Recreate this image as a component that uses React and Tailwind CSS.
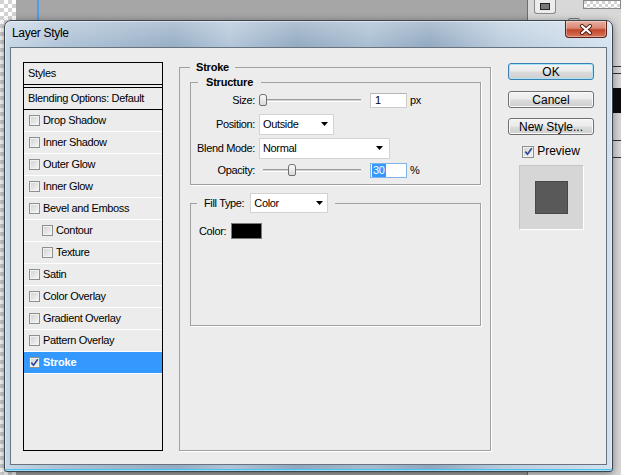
import React from 'react';

const SANS = "font-['Liberation_Sans',Arial,sans-serif]";

const styleItems = [
    { label: 'Drop Shadow' },
    { label: 'Inner Shadow' },
    { label: 'Outer Glow' },
    { label: 'Inner Glow' },
    { label: 'Bevel and Emboss' },
    { label: 'Contour', sub: true },
    { label: 'Texture', sub: true },
    { label: 'Satin' },
    { label: 'Color Overlay' },
    { label: 'Gradient Overlay' },
    { label: 'Pattern Overlay' },
    { label: 'Stroke', on: true },
];

const Check = ({ checked, big }) => (
    <span className={`${big ? 'w-[12px] h-[12px]' : 'w-[11px] h-[11px]'} shrink-0 flex items-center justify-center border border-[#8e8f8f] bg-[linear-gradient(135deg,#d0d0d0,#f7f7f7)] shadow-[inset_0_0_0_1px_#f2f2f2]`}>
        {checked && (
            <svg width="9" height="9" viewBox="0 0 9 9">
                <path d="M1.3 4.6 L3.5 7.2 L7.8 1.3" fill="none" stroke="#2d4b9b" strokeWidth="1.7" />
            </svg>
        )}
    </span>
);

const Arrow = () => (
    <svg width="7" height="4" viewBox="0 0 7 4"><path d="M0 0H7L3.5 4Z" fill="#000" /></svg>
);

// thumb offset is the only computed value
const Slider = ({ value, max }) => (
    <div className="ml-[4px] relative w-[106px] h-[12px]">
        <div className="absolute left-[4px] right-[4px] top-[5px] h-[3px] bg-[#d2d2d2] border-t border-t-[#9c9c9c] border-b border-b-white" />
        <div className="absolute top-0 w-[8px] h-[12px] rounded-t-[3px] rounded-b-[2px] border border-[#6f6f6f] bg-[linear-gradient(#fbfbfb,#d9d9d9)]"
            style={{ left: Math.round((value / max) * 98) }} />
    </div>
);

const Btn = ({ children, focused }) => (
    <div className={`h-[17px] w-[86px] rounded-[3px] border flex items-center justify-center text-[12px] tracking-normal leading-[14px]
        bg-[linear-gradient(#f3f3f3_0%,#ebebeb_48%,#dcdcdc_52%,#cfcfcf_100%)]
        ${focused ? 'border-[#3c7fb1] shadow-[inset_0_0_0_1px_#a6e4fa]' : 'border-[#707070] shadow-[inset_0_0_0_1px_#fafafa]'}`}>
        {children}
    </div>
);

const Desktop = () => (
    <>
        <div className="absolute left-0 top-0 w-[16px] h-full bg-[conic-gradient(#ffffff_90deg,#d3d3d3_90deg_180deg,#ffffff_180deg_270deg,#d3d3d3_270deg)] bg-[length:8px_8px]" />
        <div className="absolute left-[37px] top-0 w-[2px] h-[22px] bg-[#4aa0e6]" />
        <div className="absolute left-[527px] top-0 w-[94px] h-full bg-[#d8d8d8] border-l border-[#6e6e6e]">
            <div className="ml-[6px] w-[22px] h-[14px] bg-[#ececec] border border-[#8a8a8a] border-t-0 rounded-b-[3px] flex items-center justify-center">
                <div className="w-[10px] h-[7px] border border-[#222] bg-[#777]" />
            </div>
            <div className="mt-[4px] ml-[40px] w-[12px] h-[8px] rounded-[2px] border border-[#777]" />
        </div>
        <div className="absolute left-[583px] top-0 w-[38px] h-[9px] border border-[#888] bg-[conic-gradient(#ffffff_90deg,#d3d3d3_90deg_180deg,#ffffff_180deg_270deg,#d3d3d3_270deg)] bg-[length:6px_6px]" />
        <div className="absolute left-[613px] top-[66px] w-[8px] h-[1px] bg-[#333]" />
        <div className="absolute left-[613px] top-[73px] w-[8px] h-[1px] bg-[#333]" />
        <div className="absolute left-[613px] top-[88px] w-[8px] h-[25px] bg-[#0c0c0c]" />
        <div className="absolute left-[613px] top-[140px] w-[8px] h-[1px] bg-[#333]" />
        <div className="absolute left-[613px] top-[157px] w-[8px] h-[1px] bg-[#333]" />
    </>
);

const StyleList = () => (
    <div className="ml-[12px] mt-[14px] mb-[13px] w-[140px] border border-black flex flex-col">
        <div className="h-[22px] border-b border-black flex items-center pl-[4px]">Styles</div>
        <div className="h-[2px]" />
        <div className="h-[23px] border-y border-black flex items-center pl-[4px]">Blending Options: Default</div>
        {styleItems.map(item => (
            <div key={item.label}
                className={`h-[22px] shrink-0 flex items-center gap-[3px] border-b border-white
                    ${item.sub ? 'pl-[18px]' : 'pl-[5px]'}
                    ${item.on ? 'bg-[#3399ff] text-white font-bold tracking-[-0.1px]' : ''}`}>
                <Check checked={item.on} />
                <span>{item.label}</span>
            </div>
        ))}
    </div>
);

const StrokePanel = () => (
    <fieldset className="ml-[16px] mt-[12px] mb-[13px] w-[312px] border border-[#a0a0a0] shadow-[1px_1px_0_#ffffff]">
        <legend className="ml-[10px] px-[6px] font-bold leading-[14px] tracking-[-0.2px]">Stroke</legend>

        <fieldset className="ml-[10px] mr-[9px] mt-[1px] pb-[3px] border border-[#a0a0a0] shadow-[1px_1px_0_#ffffff]">
            <legend className="ml-[7px] px-[8px] font-bold leading-[14px] tracking-[-0.2px]">Structure</legend>

            <div className="flex items-center h-[22px]">
                <span className="w-[64px] text-right">Size:</span>
                <Slider value={1} max={250} />
                <div className="ml-[5px] w-[37px] h-[15px] bg-white border border-[#cdcdcd] border-t-[#b5b5b5] flex items-center pl-[4px] leading-[13px]">1</div>
                <span className="ml-[3px]">px</span>
            </div>
            <div className="flex items-center h-[22px] mt-[2px]">
                <span className="w-[64px] text-right">Position:</span>
                <div className="ml-[4px] w-[75px] h-[21px] bg-white border border-[#d3d3d3] flex items-center justify-between pl-[3px] pr-[5px]">
                    <span>Outside</span><Arrow />
                </div>
            </div>
            <div className="flex items-center h-[22px] mt-[2px]">
                <span className="w-[64px] text-right">Blend Mode:</span>
                <div className="ml-[4px] w-[131px] h-[21px] bg-white border border-[#d3d3d3] flex items-center justify-between pl-[3px] pr-[6px]">
                    <span>Normal</span><Arrow />
                </div>
            </div>
            <div className="flex items-center h-[22px]">
                <span className="w-[64px] text-right">Opacity:</span>
                <Slider value={30} max={100} />
                <div className="ml-[5px] w-[37px] h-[15px] bg-white border border-[#7eb4ea] flex items-center pl-[1px]">
                    <span className="bg-[#3399ff] text-white px-[1px] leading-[13px]">30</span>
                </div>
                <span className="ml-[3px]">%</span>
            </div>
        </fieldset>

        <fieldset className="ml-[10px] mr-[9px] mt-[8px] pb-[86px] border border-[#a0a0a0] shadow-[1px_1px_0_#ffffff]">
            <legend className="ml-[6px] px-[7px] flex items-center">
                <span>Fill Type:</span>
                <div className="ml-[6px] w-[78px] h-[20px] bg-white border border-[#d3d3d3] flex items-center justify-between pl-[3px] pr-[4px]">
                    <span>Color</span><Arrow />
                </div>
            </legend>
            <div className="mt-[10px] ml-[8px] h-[16px] flex items-center">
                <span>Color:</span>
                <div className="ml-[5px] w-[31px] h-[16px] bg-black border border-[#7a7a7a]" />
            </div>
        </fieldset>
    </fieldset>
);

const Buttons = () => (
    <div className="ml-[17px] mt-[15px] w-[86px] flex flex-col">
        <Btn focused>OK</Btn>
        <div className="mt-[11px]"><Btn>Cancel</Btn></div>
        <div className="mt-[10px]"><Btn>New Style...</Btn></div>
        <div className="mt-[10px] h-[13px] flex items-center justify-center gap-[3px] text-[12px] tracking-normal leading-[13px]">
            <Check checked big />
            <span>Preview</span>
        </div>
        <div className="mt-[7px] mx-auto w-[65px] h-[65px] bg-[#d6d6d6] border border-[#c4c4c4] border-r-white border-b-white flex items-center justify-center">
            <div className="w-[33px] h-[33px] bg-[#595959] border border-[#474747]" />
        </div>
    </div>
);

export default function App() {
    return (
        <div className={`relative w-[621px] h-[475px] overflow-hidden bg-[#a6a6a6] pl-[4px] pt-[20px] ${SANS} text-[11px] tracking-[-0.35px] text-black`}>
            <Desktop />

            <div className="relative w-[609px] h-[452px] flex flex-col rounded-t-[7px] rounded-b-[3px] border border-[#3b4550]
                bg-[linear-gradient(180deg,rgba(255,255,255,0.3),rgba(255,255,255,0)_30px),linear-gradient(90deg,#c6d6e6_0%,#abc0d5_10%,#93abc3_28%,#b0c4d8_37%,#8fa7bf_48%,#a5bbd0_60%,#8ea6bf_70%,#b9cbdd_82%,#d4e2ef_100%)]
                shadow-[inset_0_0_0_1px_rgba(255,255,255,0.45),inset_0_-2px_0_#4fc3ee,0_2px_8px_rgba(0,0,0,0.45)]">
                <div className="h-[26px] shrink-0 flex items-start justify-between pl-[7px] pr-[5px]">
                    <span className="mt-[5px] text-[12px] tracking-[-0.3px] leading-[14px]">Layer Style</span>
                    <div className="w-[42px] h-[17px] rounded-b-[4px] border border-[#5a2418] border-t-0 flex items-center justify-center
                        bg-[linear-gradient(#eab0a3_0%,#d98671_45%,#c2452c_55%,#d5755a_100%)] shadow-[inset_0_0_0_1px_rgba(255,255,255,0.35)]">
                        <svg width="14" height="11" viewBox="0 0 14 11">
                            <path d="M3 2 L11 9 M11 2 L3 9" stroke="#4a1a10" strokeWidth="4" strokeLinecap="round" />
                            <path d="M3 2 L11 9 M11 2 L3 9" stroke="#ffffff" strokeWidth="2.2" strokeLinecap="round" />
                        </svg>
                    </div>
                </div>

                <div className="mx-[5px] h-[418px] shrink-0 border border-[#67737e] bg-[#ececec] flex">
                    <StyleList />
                    <StrokePanel />
                    <Buttons />
                </div>
            </div>
        </div>
    );
}
